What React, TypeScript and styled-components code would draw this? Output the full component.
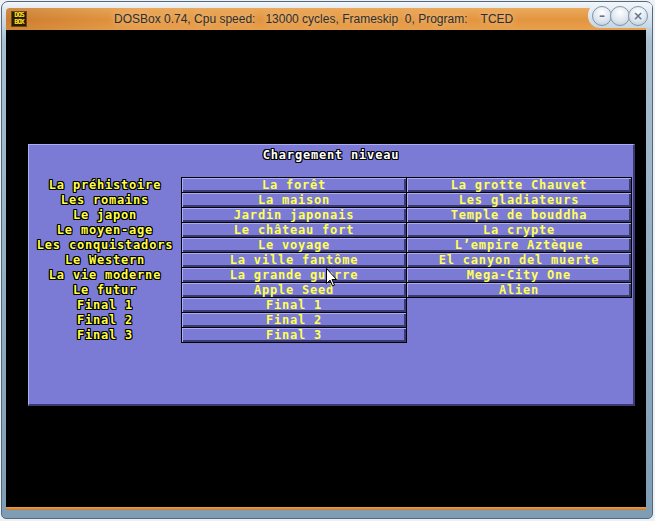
import React from "react"
import styled, { createGlobalStyle } from "styled-components"

const GlobalStyle = createGlobalStyle`
  html, body {
    margin: 0;
    padding: 0;
    background: #eef1f4;
  }
  body {
    width: 655px;
    height: 521px;
    overflow: hidden;
  }
`

const Window = styled.div`
  position: relative;
  box-sizing: border-box;
  width: 652px;
  height: 518px;
  margin: 1px 0 0 1px;
  padding: 6px 6px 7px 4px;
  border: 1px solid #56697b;
  border-radius: 7px 7px 5px 5px;
  background: linear-gradient(
    to bottom,
    #f4f7fa 0px,
    #dfe8ef 7px,
    #a9bfd0 40px,
    #7e9db4 100%
  );
  display: flex;
  flex-direction: column;
`

const TitleBar = styled.div`
  height: 22px;
  display: flex;
  align-items: center;
  border-radius: 4px 6px 0 0;
  background: linear-gradient(to right, rgba(150, 70, 10, 0.3), rgba(150, 70, 10, 0) 130px),
    linear-gradient(to bottom, #eba95c 0%, #e3953f 55%, #e8a04c 100%);
`

const AppIcon = styled.div`
  box-sizing: border-box;
  width: 16px;
  height: 16px;
  margin-left: 5px;
  background: #2a1a02;
  border: 1px solid #6b4a10;
  color: #ffe020;
  font: bold 7px/7px "DejaVu Sans Mono", monospace;
  letter-spacing: -1px;
  text-align: center;
  overflow: hidden;
`

const TitleText = styled.span`
  margin-left: 87px;
  font: 12px "Liberation Sans", Arial, sans-serif;
  color: #2e2e2e;
  white-space: pre;
  text-shadow: 0 0 6px rgba(255, 235, 200, 0.8);
`

const CaptionGroup = styled.div`
  position: absolute;
  top: 1px;
  right: 0px;
  width: 64px;
  height: 25px;
  padding-left: 4px;
  box-sizing: border-box;
  display: flex;
  align-items: center;
  border-radius: 12px 4px 0 12px;
  background: linear-gradient(to bottom, #f2f6fa, #c5d6e4);
`

const CaptionButton = styled.div`
  box-sizing: border-box;
  width: 20px;
  height: 20px;
  margin-right: -2px;
  border-radius: 50%;
  border: 1px solid #7c96ad;
  background: radial-gradient(circle at 50% 30%, #ffffff, #dfe6ee 55%, #b7c6d4);
  display: flex;
  align-items: center;
  justify-content: center;
  color: #5f7890;
  font: bold 12px/1 "DejaVu Sans", sans-serif;
`

const Screen = styled.div`
  position: relative;
  height: 477px;
  background: #000;
  padding: 114px 0 0 22px;
  box-sizing: border-box;
`

const BottomStrip = styled.div`
  height: 3px;
  background: linear-gradient(to bottom, #e7a04b, #c97a2c);
`

const Panel = styled.div`
  box-sizing: border-box;
  width: 607px;
  height: 262px;
  background: #7b7bd6;
  border-top: 1px solid #acacf4;
  border-left: 1px solid #acacf4;
  border-right: 2px solid #3a3a72;
  border-bottom: 2px solid #3a3a72;
  font: bold 12px/15px "DejaVu Sans Mono", "Liberation Mono", monospace;
  letter-spacing: 0.8px;
`

const outline = `1px 0 #000, -1px 0 #000, 0 1px #000, 0 -1px #000, 1px 1px #000, -1px -1px #000, 1px -1px #000, -1px 1px #000`

const PanelTitle = styled.div`
  margin-top: 3px;
  text-align: center;
  color: #ffffff;
  text-shadow: ${outline};
`

const LevelGrid = styled.div`
  margin-top: 14px;
  display: grid;
  grid-template-columns: 152px 225px 226px;
  grid-auto-rows: 15px;
`

const EraLabel = styled.div<{ $row: number }>`
  grid-column: 1;
  grid-row: ${(p) => p.$row};
  padding-top: 1px;
  text-align: center;
  color: #ffff44;
  text-shadow: ${outline};
`

const LevelButton = styled.div<{ $row: number; $col: number }>`
  grid-column: ${(p) => p.$col};
  grid-row: ${(p) => p.$row};
  margin-bottom: -1px;
  margin-right: ${(p) => (p.$col === 2 ? "-1px" : "0")};
  padding-top: 1px;
  border: 1px solid #000;
  background: #7b7bd6;
  box-shadow: inset 1px 1px 0 #adadf6, inset -2px -2px 0 #3a3a74;
  color: #ffff55;
  text-align: center;
  line-height: 12px;
`

const Cursor = styled.svg`
  position: absolute;
  left: 320px;
  top: 238px;
`

const eras = [
  "La préhistoire",
  "Les romains",
  "Le japon",
  "Le moyen-age",
  "Les conquistadors",
  "Le Western",
  "La vie moderne",
  "Le futur",
  "Final 1",
  "Final 2",
  "Final 3",
]

const firstLevels = [
  "La forêt",
  "La maison",
  "Jardin japonais",
  "Le château fort",
  "Le voyage",
  "La ville fantôme",
  "La grande guerre",
  "Apple Seed",
  "Final 1",
  "Final 2",
  "Final 3",
]

const secondLevels = [
  "La grotte Chauvet",
  "Les gladiateurs",
  "Temple de bouddha",
  "La crypte",
  "L’empire Aztèque",
  "El canyon del muerte",
  "Mega-City One",
  "Alien",
]

export default function App() {
  return (
    <>
      <GlobalStyle />
      <Window>
        <TitleBar>
          <AppIcon>
            DOS
            <br />
            BOX
          </AppIcon>
          <TitleText>
            {"DOSBox 0.74, Cpu speed:   13000 cycles, Frameskip  0, Program:    TCED"}
          </TitleText>
        </TitleBar>
        <CaptionGroup>
          <CaptionButton>–</CaptionButton>
          <CaptionButton />
          <CaptionButton>×</CaptionButton>
        </CaptionGroup>
        <Screen>
          <Panel>
            <PanelTitle>Chargement niveau</PanelTitle>
            <LevelGrid>
              {eras.map((era, i) => (
                <EraLabel key={era} $row={i + 1}>
                  {era}
                </EraLabel>
              ))}
              {firstLevels.map((name, i) => (
                <LevelButton key={"a" + i} $row={i + 1} $col={2}>
                  {name}
                </LevelButton>
              ))}
              {secondLevels.map((name, i) => (
                <LevelButton key={"b" + i} $row={i + 1} $col={3}>
                  {name}
                </LevelButton>
              ))}
            </LevelGrid>
          </Panel>
          <Cursor width="12" height="19" viewBox="0 0 12 19">
            <path
              d="M0.5 0.5 L0.5 15.5 L4 12 L6.5 18 L8.5 17 L6 11.5 L10.5 11.5 Z"
              fill="#fff"
              stroke="#000"
              strokeWidth="1"
            />
          </Cursor>
        </Screen>
        <BottomStrip />
      </Window>
    </>
  )
}
